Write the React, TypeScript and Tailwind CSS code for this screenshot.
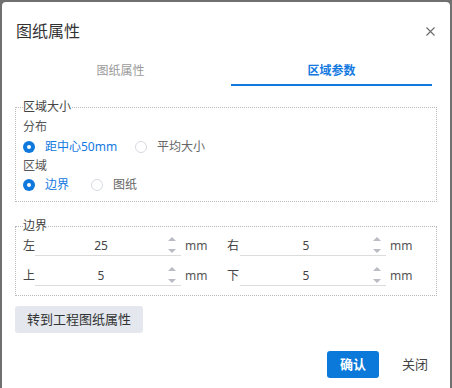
import * as React from "react"

const font = { fontFamily: '"Noto Sans", "Noto Sans CJK SC", sans-serif' }

function Radio({ checked, label, className = "" }: { checked?: boolean; label: string; className?: string }) {
  return (
    <div className={`flex items-center ${className}`}>
      {checked ? (
        <span className="flex h-[12px] w-[12px] items-center justify-center rounded-full bg-[#0f78dc]">
          <span className="h-[4px] w-[4px] rounded-full bg-white" />
        </span>
      ) : (
        <span className="h-[12px] w-[12px] rounded-full border border-[#d6d9e0] bg-white" />
      )}
      <span className={`ml-[10px] text-[12px] leading-[16px] ${checked ? "text-[#1479df]" : "text-[#666]"}`}>
        {label}
      </span>
    </div>
  )
}

function Spinner() {
  return (
    <svg width="10" height="20" viewBox="0 0 10 20" className="shrink-0">
      <polygon points="1,5 5,1 9,5" fill="#b9bcc4" />
      <polygon points="1,13 5,17 9,13" fill="#b9bcc4" />
    </svg>
  )
}

function NumField({ label, value, labelW }: { label: string; value: string; labelW: string }) {
  return (
    <div className="flex h-[20px] items-center">
      <span className={`${labelW} text-[12px] leading-[16px] text-[#444]`}>{label}</span>
      <div className="flex h-[20px] w-[146px] items-center border-b border-[#dcdcdc]">
        <span className="flex-1 text-center text-[12px] leading-[16px] text-[#444]">{value}</span>
        <span className="mr-[4px]">
          <Spinner />
        </span>
      </div>
      <span className="ml-[4px] text-[12px] leading-[16px] text-[#555]">mm</span>
    </div>
  )
}

export default function App() {
  return (
    <div className="h-[388px] w-[452px] overflow-hidden bg-[#707070] pl-[2px] pt-[2px]" style={font}>
      <div className="flex h-[386px] w-[448px] flex-col rounded-t-[4px] bg-white">
        {/* header */}
        <div className="flex items-center justify-between pl-[14px] pr-[15px] pt-[19px]">
          <span className="text-[16px] leading-[20px] text-[#333]">图纸属性</span>
          <svg width="9" height="9" viewBox="0 0 9 9">
            <path d="M0.5 0.5 L8.5 8.5 M8.5 0.5 L0.5 8.5" stroke="#6b6b6b" strokeWidth="1.1" />
          </svg>
        </div>

        {/* tabs */}
        <div className="mt-[17px] flex pl-[8px]">
          <div className="flex h-[28px] w-[221px] items-center justify-center pb-[2px] text-[12px] text-[#9a9a9a]">
            图纸属性
          </div>
          <div className="flex h-[28px] w-[201px] items-center justify-center border-b-2 border-[#1479df] text-[12px] font-bold text-[#1479df]">
            区域参数
          </div>
        </div>

        {/* region size */}
        <fieldset className="ml-[13px] mt-[13px] w-[422px] border border-dotted border-[#b8b8b8] px-[7px] pb-[7px]">
          <legend className="text-[12px] leading-[16px] text-[#444]">区域大小</legend>
          <div className="mt-[2px] flex h-[20px] items-center text-[12px] text-[#555]">分布</div>
          <div className="flex h-[19px] items-center">
            <Radio checked label="距中心50mm" className="w-[112px]" />
            <Radio label="平均大小" />
          </div>
          <div className="flex h-[19px] items-center text-[12px] text-[#555]">区域</div>
          <div className="flex h-[19px] items-center">
            <Radio checked label="边界" className="w-[68px]" />
            <Radio label="图纸" />
          </div>
        </fieldset>

        {/* border */}
        <fieldset className="ml-[13px] mt-[16px] w-[422px] border border-dotted border-[#b8b8b8] px-[7px] pb-[9px]">
          <legend className="text-[12px] leading-[16px] text-[#444]">边界</legend>
          <div className="mt-[2px] grid grid-cols-[204px_1fr] gap-y-[10px]">
            <NumField label="左" value="25" labelW="w-[12px]" />
            <NumField label="右" value="5" labelW="w-[13px]" />
            <NumField label="上" value="5" labelW="w-[12px]" />
            <NumField label="下" value="5" labelW="w-[13px]" />
          </div>
        </fieldset>

        <div className="ml-[13px] mt-[10px]">
          <button className="h-[27px] w-[128px] rounded-[3px] bg-[#e4e7ee] text-[13px] text-[#333]">
            转到工程图纸属性
          </button>
        </div>

        {/* footer */}
        <div className="mt-[18px] flex justify-end gap-[10px] pr-[9px]">
          <button className="h-[27px] w-[52px] rounded-[3px] bg-[#0b79d9] text-[13px] font-bold text-white">
            确认
          </button>
          <button className="h-[27px] w-[52px] text-[13px] text-[#444]">关闭</button>
        </div>
      </div>
    </div>
  )
}
